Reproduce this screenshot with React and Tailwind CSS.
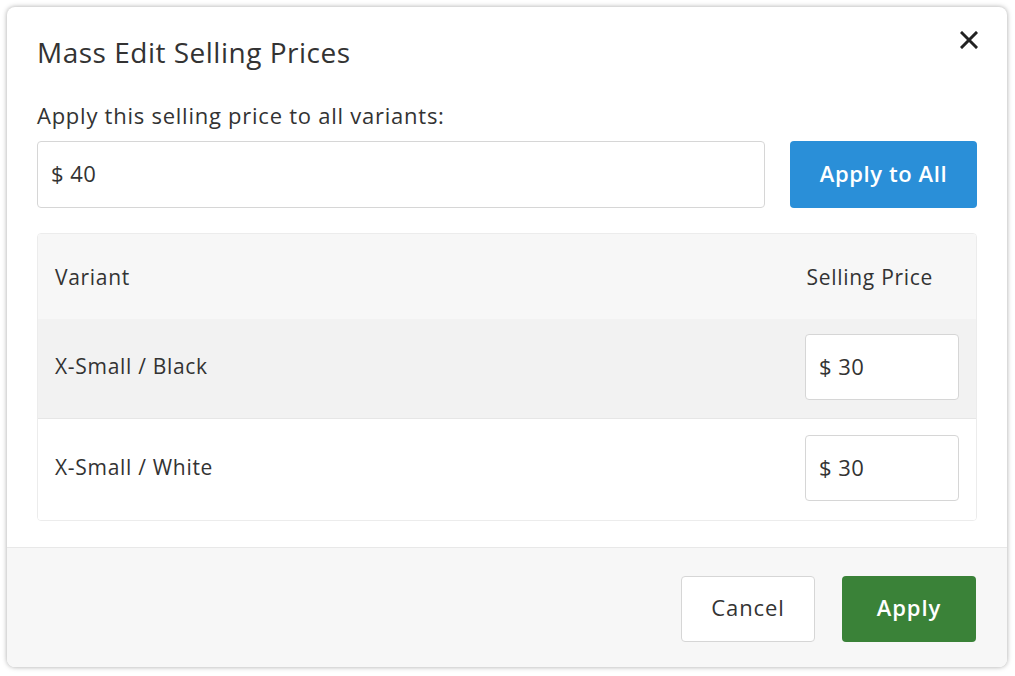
import React from 'react';

const rows = [
  { name: 'X-Small / Black', price: '$ 30', shaded: true },
  { name: 'X-Small / White', price: '$ 30', shaded: false },
];

const App = () => (
  <div className="w-[1015px] h-[676px] bg-white pt-[7px] pl-[7px] font-['Open_Sans',sans-serif] text-[#333]">
    <div className="w-[1000px] h-[660px] rounded-[8px] bg-white shadow-[0_0_5px_rgba(0,0,0,0.35)] flex flex-col overflow-hidden">
      <div className="flex-1 px-[30px] pt-[27px]">
        <div className="flex justify-between items-start">
          <h1 className="text-[28px] leading-[36px] tracking-[0.5px]">Mass Edit Selling Prices</h1>
          <button className="mt-[-4px] mr-[-2px] p-[1px]">
            <svg width="18" height="18" viewBox="0 0 18 18">
              <path d="M2 2 L16 16 M16 2 L2 16" stroke="#222" strokeWidth="3" strokeLinecap="square" />
            </svg>
          </button>
        </div>
        <p className="mt-[31px] text-[22px] leading-[28px] tracking-[0.75px]">Apply this selling price to all variants:</p>
        <div className="mt-[12px] flex gap-[25px]">
          <input
            className="flex-1 h-[67px] rounded-[4px] border border-[#d6d6d6] px-[13px] pb-[3px] text-[22px] tracking-[0.5px] outline-none"
            defaultValue="$ 40"
          />
          <button className="w-[187px] h-[67px] pb-[3px] rounded-[4px] bg-[#2a8fd8] text-white text-[22px] tracking-[0.6px] font-semibold">
            Apply to All
          </button>
        </div>
        <div className="mt-[25px] rounded-[4px] border border-[#ececec] overflow-hidden text-[21px] tracking-[0.7px]">
          <div className="h-[85px] pt-[2px] bg-[#f7f7f7] flex items-center justify-between pl-[17px] pr-[43px]">
            <span>Variant</span>
            <span>Selling Price</span>
          </div>
          {rows.map((r, i) => (
            <div
              key={r.name}
              className={`${r.shaded ? 'bg-[#f2f2f2] h-[100px]' : 'bg-white h-[101px]'} ${i === 0 ? 'border-b border-[#e6e6e6]' : ''} pb-[3px] flex items-center justify-between pl-[17px] pr-[17px]`}
            >
              <span>{r.name}</span>
              <input
                className="w-[154px] h-[66px] rounded-[4px] border border-[#d6d6d6] bg-white px-[13px] pb-[2px] text-[22px] tracking-[0.5px] outline-none"
                defaultValue={r.price}
              />
            </div>
          ))}
        </div>
      </div>
      <div className="h-[120px] border-t border-[#e8e8e8] bg-[#f7f7f7] flex justify-end items-start gap-[27px] pt-[28px] pr-[31px] text-[22px] tracking-[0.9px]">
        <button className="w-[134px] h-[66px] pb-[3px] rounded-[4px] border border-[#d6d6d6] bg-white">Cancel</button>
        <button className="w-[134px] h-[66px] pb-[3px] rounded-[4px] bg-[#3a8238] text-white font-semibold">Apply</button>
      </div>
    </div>
  </div>
);

export default App;
